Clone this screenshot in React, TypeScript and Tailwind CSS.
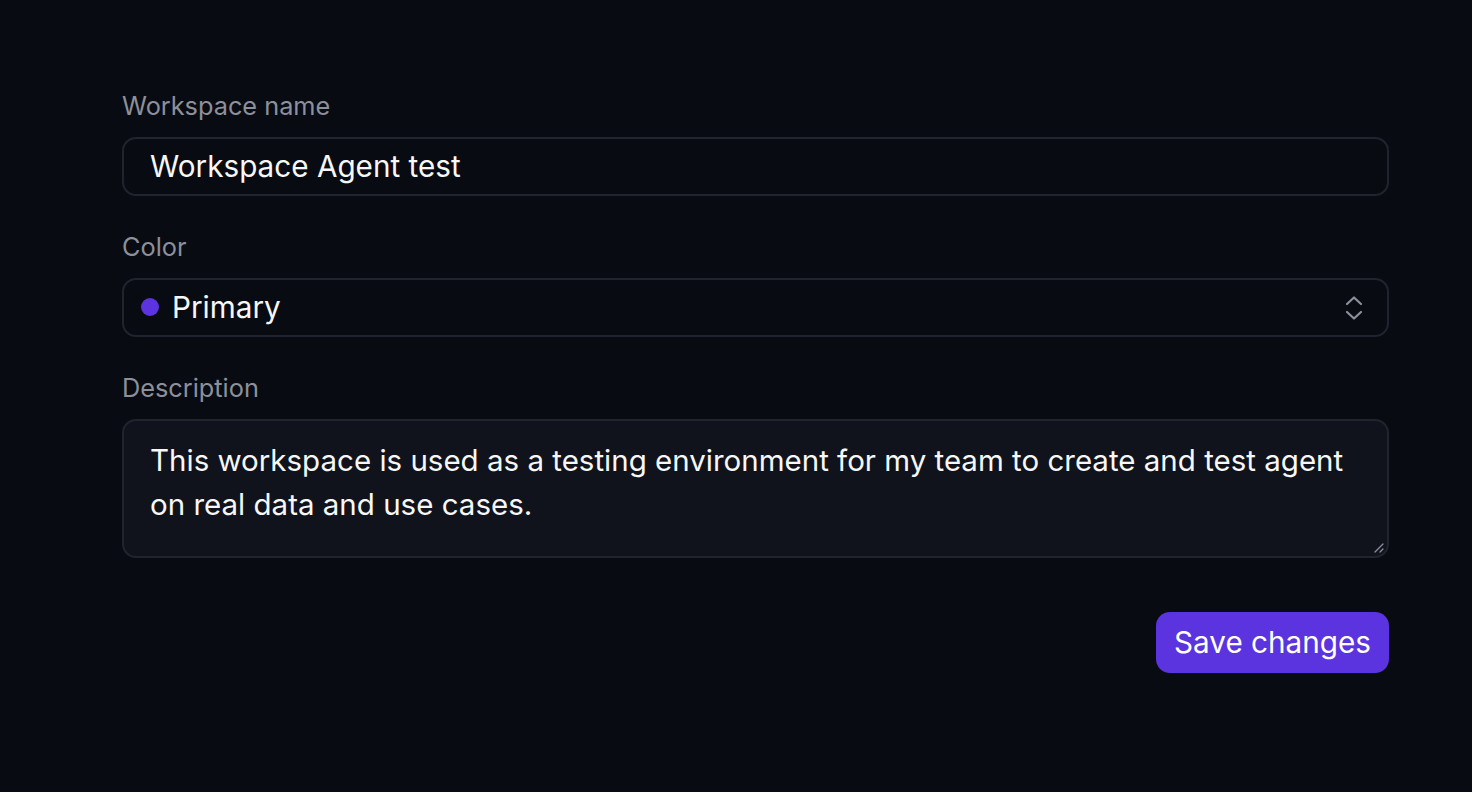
export default function App() {
  return (
    <div
      className="min-h-[792px] w-full bg-[#090b12] text-white"
      style={{ fontFamily: "Inter, 'Noto Sans', sans-serif" }}
    >
      <div className="ml-[122px] w-[1267px] pt-[90px]">
        {/* Workspace name */}
        <div className="flex flex-col">
          <label className="h-[32px] text-[25.3px] leading-[32px] text-[#8c909b]">Workspace name</label>
          <div className="mt-[15px] flex h-[59px] items-center rounded-[14px] border-2 border-[#20242e] px-[26px]">
            <span className="text-[29.7px] text-[#f7f7f8]">Workspace Agent test</span>
          </div>
        </div>

        {/* Color */}
        <div className="mt-[35px] flex flex-col">
          <label className="h-[32px] text-[25.3px] leading-[32px] text-[#8c909b]">Color</label>
          <div className="mt-[15px] flex h-[59px] items-center justify-between rounded-[14px] border-2 border-[#20242e] pl-[17px] pr-[24px]">
            <div className="flex items-center gap-[13px]">
              <span className="h-[18px] w-[18px] rounded-full bg-[#5b34e0]" />
              <span className="text-[29.7px] text-[#f7f7f8]">Primary</span>
            </div>
            <svg width="18" height="26" viewBox="0 0 18 26" fill="none">
              <path
                d="M2 9 L9 2.5 L16 9 M2 17 L9 23.5 L16 17"
                stroke="#8c909b"
                strokeWidth="2.2"
                strokeLinecap="round"
                strokeLinejoin="round"
              />
            </svg>
          </div>
        </div>

        {/* Description */}
        <div className="mt-[35px] flex flex-col">
          <label className="h-[32px] text-[25.3px] leading-[32px] text-[#8c909b]">Description</label>
          <div className="relative mt-[15px] h-[139px] rounded-[14px] border-2 border-[#20242e] bg-[#10131b] pl-[26px] pr-[14px] pt-[17px]">
            <p className="text-[29.5px] leading-[44px] text-[#f7f7f8]">
              This workspace is used as a testing environment for my team to create and test agent on real data and use cases.
            </p>
            <svg className="absolute bottom-[3px] right-[3px]" width="12" height="12" viewBox="0 0 12 12">
              <path d="M11 3 L3 11 M11 8 L8 11" stroke="#8c909b" strokeWidth="1.3" strokeLinecap="round" />
            </svg>
          </div>
        </div>

        <div className="mt-[54px] flex justify-end">
          <button className="h-[61px] rounded-[14px] bg-[#5b34e0] px-[18px] text-[29.7px] text-white">
            Save changes
          </button>
        </div>
      </div>
    </div>
  );
}
